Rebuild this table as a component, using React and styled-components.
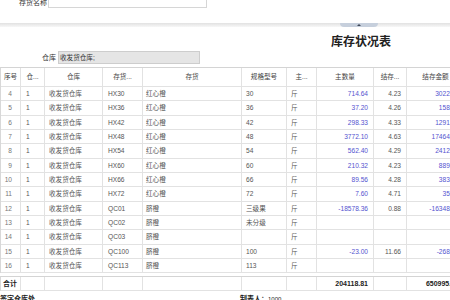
import React from "react";
import styled, { createGlobalStyle } from "styled-components";

const Global = createGlobalStyle`
  html, body { margin: 0; padding: 0; background: #fff; overflow: hidden; }
  body { font-family: "Liberation Sans", "Noto Sans CJK SC", sans-serif; }
`;

const COLS = "20px 24px 58px 40px 99px 45px 30px 57px 33px 58px";

const Page = styled.div`
  width: 722px;
  height: 300px;
  overflow: hidden;
`;

const FilterBar = styled.div`
  display: flex;
  align-items: center;
  gap: 1px;
  height: 10px;
  margin-top: -2px;
  padding-left: 19px;
`;

const FieldLabel = styled.span`
  font-size: 7px;
  line-height: 10px;
  color: #333;
  white-space: nowrap;
`;

const TextInput = styled.div`
  width: 159px;
  height: 10px;
  box-sizing: border-box;
  border: 1px solid #d6d6d6;
  background: #fff;
`;

const Splitter = styled.div`
  position: relative;
  width: 100%;
  height: 4px;
  margin-top: 15px;
  background: linear-gradient(#e1e1e1, #f7f7f7);
`;

const SplitHandle = styled.div`
  position: absolute;
  left: 340px;
  top: 0;
  width: 38px;
  height: 4px;
  border-radius: 0 0 5px 5px;
  background: #c6cfdc;
  display: flex;
  justify-content: center;
  align-items: center;
`;

const HandleArrow = styled.span`
  width: 0;
  height: 0;
  border-left: 2px solid transparent;
  border-right: 2px solid transparent;
  border-bottom: 2px solid #3d4656;
`;

const Title = styled.h1`
  margin: 0 0 2px;
  padding-top: 6px;
  height: 22px;
  box-sizing: border-box;
  text-align: center;
  font-family: "Noto Sans CJK SC", sans-serif;
  font-size: 12px;
  line-height: 16px;
  font-weight: 700;
  color: #222;
`;

const WarehouseRow = styled.div`
  display: flex;
  align-items: center;
  gap: 2px;
  height: 13px;
  padding-left: 42px;
  margin-bottom: 3px;
`;

const ReadonlyInput = styled.div`
  width: 142px;
  height: 13px;
  box-sizing: border-box;
  border: 1px solid #cdcdcd;
  background: #e5e5e5;
  padding-left: 1px;
  font-size: 6.6px;
  line-height: 11px;
  color: #333;
`;

const Grid = styled.div`
  width: 466px;
  border-left: 1px solid #d8d8d8;
  border-top: 1px solid #d4d4d4;
  margin-top: ${(p) => p.$gap || 0}px;
`;

const Row = styled.div`
  display: grid;
  grid-template-columns: ${COLS};
  height: ${(p) => p.$h}px;
`;

const toneColor = {
  head: "#444",
  serial: "#777",
  text: "#555",
  num: "#5353cf",
  total: "#222",
};

const Cell = styled.div`
  box-sizing: border-box;
  border-right: 1px solid #e2e2e2;
  border-bottom: 1px solid #e2e2e2;
  padding: ${(p) => (p.$align === "right" ? "0 5px 0 0" : p.$align === "center" ? "0" : `0 0 0 ${p.$pad ?? 4}px`)};
  text-align: ${(p) => p.$align || "left"};
  font-size: ${(p) => (p.$bold ? 7 : 6.6)}px;
  font-weight: ${(p) => (p.$bold ? 700 : 400)};
  line-height: ${(p) => p.$lh}px;
  color: ${(p) => toneColor[p.$tone || "text"]};
  white-space: nowrap;
  overflow: hidden;
`;

const Footer = styled.div`
  display: grid;
  grid-template-columns: 240px auto;
  padding-top: 4px;
  font-size: 7px;
  line-height: 8px;
  color: #222;
`;

const Strong = styled.span`
  font-weight: 700;
`;

const Small = styled.span`
  font-size: 6px;
`;

const headers = [
  { t: "序号" },
  { t: "仓..." },
  { t: "仓库" },
  { t: "存货..." },
  { t: "存货" },
  { t: "规格型号" },
  { t: "主..." },
  { t: "主数量" },
  { t: "结存..." },
  { t: "结存金额" },
];

const rows = [
  ["4", "1", "收发货仓库", "HX30", "红心橙", "30", "斤", "714.64", "4.23", "3022.93"],
  ["5", "1", "收发货仓库", "HX36", "红心橙", "36", "斤", "37.20", "4.26", "158.47"],
  ["6", "1", "收发货仓库", "HX42", "红心橙", "42", "斤", "298.33", "4.33", "1291.77"],
  ["7", "1", "收发货仓库", "HX48", "红心橙", "48", "斤", "3772.10", "4.63", "17464.82"],
  ["8", "1", "收发货仓库", "HX54", "红心橙", "54", "斤", "562.40", "4.29", "2412.70"],
  ["9", "1", "收发货仓库", "HX60", "红心橙", "60", "斤", "210.32", "4.23", "889.65"],
  ["10", "1", "收发货仓库", "HX66", "红心橙", "66", "斤", "89.56", "4.28", "383.32"],
  ["11", "1", "收发货仓库", "HX72", "红心橙", "72", "斤", "7.60", "4.71", "35.80"],
  ["12", "1", "收发货仓库", "QC01", "脐橙", "三级果", "斤", "-18578.36", "0.88", "-16348.96"],
  ["13", "1", "收发货仓库", "QC02", "脐橙", "未分级", "斤", "", "", ""],
  ["14", "1", "收发货仓库", "QC03", "脐橙", "", "斤", "", "", ""],
  ["15", "1", "收发货仓库", "QC100", "脐橙", "100", "斤", "-23.00", "11.66", "-268.18"],
  ["16", "1", "收发货仓库", "QC113", "脐橙", "113", "斤", "", "", ""],
];

const colSpec = [
  { align: "right", tone: "serial", padR: 8 },
  { align: "left", pad: 5 },
  { align: "left", pad: 4 },
  { align: "left", pad: 5 },
  { align: "left", pad: 3 },
  { align: "left", pad: 4 },
  { align: "left", pad: 4 },
  { align: "right", tone: "num" },
  { align: "right" },
  { align: "right", tone: "num" },
];

const ROW_H = 14.33;

export default function App() {
  return (
    <Page>
      <Global />
      <FilterBar>
        <FieldLabel>存货名称</FieldLabel>
        <TextInput />
      </FilterBar>
      <Splitter>
        <SplitHandle>
          <HandleArrow />
        </SplitHandle>
      </Splitter>
      <Title>库存状况表</Title>
      <WarehouseRow>
        <FieldLabel>仓库</FieldLabel>
        <ReadonlyInput>收发货仓库;</ReadonlyInput>
      </WarehouseRow>

      <Grid>
        <Row $h={19}>
          {headers.map((h, i) => (
            <Cell key={i} $align="center" $tone="head" $lh={18}>
              {h.t}
            </Cell>
          ))}
        </Row>
        {rows.map((r, ri) => (
          <Row key={ri} $h={ROW_H}>
            {r.map((v, ci) => {
              const s = colSpec[ci];
              return (
                <Cell
                  key={ci}
                  $align={s.align}
                  $pad={s.pad}
                  $tone={s.tone}
                  $lh={ROW_H - 1}
                  style={ci === 0 ? { paddingRight: s.padR } : undefined}
                >
                  {v}
                </Cell>
              );
            })}
          </Row>
        ))}
      </Grid>

      <Grid $gap={3}>
        <Row $h={14}>
          <Cell $align="left" $pad={2} $bold $tone="total" $lh={13}>合计</Cell>
          <Cell $lh={13} />
          <Cell $lh={13} />
          <Cell $lh={13} />
          <Cell $lh={13} />
          <Cell $lh={13} />
          <Cell $lh={13} />
          <Cell $align="right" $bold $tone="total" $lh={13}>204118.81</Cell>
          <Cell $lh={13} />
          <Cell $align="right" $bold $tone="total" $lh={13}>650995.14</Cell>
        </Row>
      </Grid>

      <Footer>
        <Strong>签字仓库处</Strong>
        <span>
          <Strong>制表人：</Strong>
          <Small>1000</Small>
        </span>
      </Footer>
    </Page>
  );
}
